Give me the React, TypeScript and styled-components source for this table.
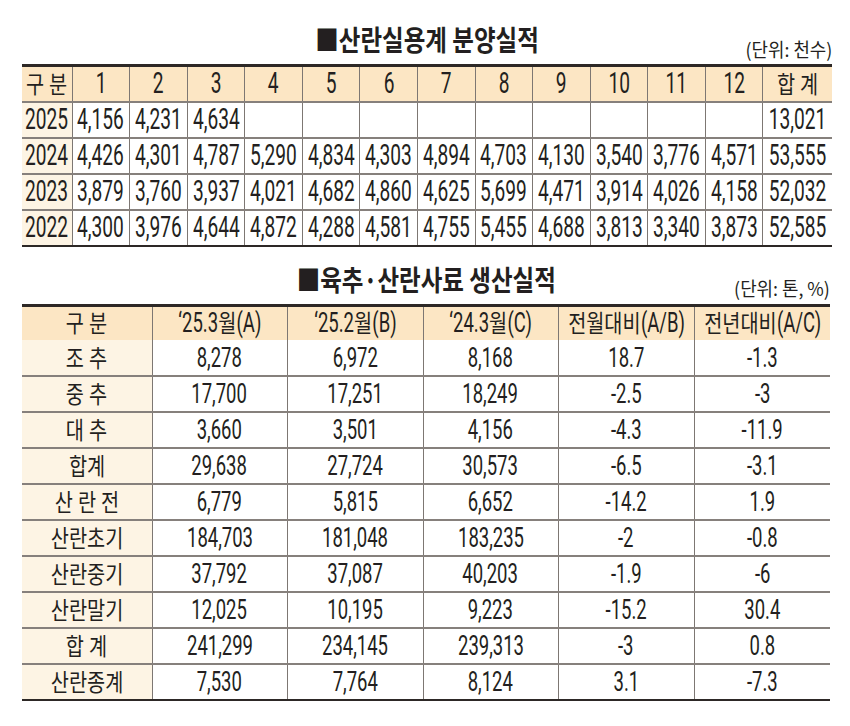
import React from 'react';
import styled, { createGlobalStyle } from 'styled-components';

const GlobalStyle = createGlobalStyle`
  html, body { margin: 0; padding: 0; background: #ffffff; }
  body { font-family: "Noto Sans CJK KR", sans-serif; color: #231f20; }
`;

const Page = styled.div`
  width: 850px;
  height: 726px;
  box-sizing: border-box;
  padding: 0 18px 0 22px;
  display: flex;
  flex-direction: column;
`;

const Head = styled.div<{ $h: number; $w: number }>`
  height: ${p => p.$h}px;
  width: ${p => p.$w}px;
  display: grid;
  grid-template-columns: 1fr auto 1fr;
  align-items: end;
`;

const Title = styled.h2<{ $pb: number }>`
  grid-column: 2;
  margin: 0;
  padding-bottom: ${p => p.$pb}px;
  font-family: "Noto Sans CJK KR", sans-serif;
  font-size: 28px;
  font-weight: 700;
  line-height: 1;
  white-space: nowrap;
  color: #231f20;
  transform: scaleX(0.84);
`;

const Unit = styled.div<{ $pb: number }>`
  grid-column: 3;
  justify-self: end;
  padding-bottom: ${p => p.$pb}px;
  font-family: "Noto Sans CJK KR", sans-serif;
  font-size: 19px;
  line-height: 1;
  white-space: nowrap;
  transform: scaleX(0.94);
  transform-origin: right bottom;
`;

const Table = styled.table<{ $w: number }>`
  width: ${p => p.$w}px;
  border-collapse: collapse;
  table-layout: fixed;
  border-top: 3px solid #2d2826;
  border-bottom: 2px solid #2d2826;
`;

const Row = styled.tr<{ $h: number }>`
  height: ${p => p.$h}px;
  & + & > td {
    border-top: 2px solid #86807c;
  }
`;

const Cell = styled.td<{ $kind: 'head' | 'side' | 'data' }>`
  padding: 0;
  vertical-align: middle;
  background: ${p => (p.$kind === 'head' ? '#fce6c4' : p.$kind === 'side' ? '#fdf4e4' : '#ffffff')};
  border-left: 1px solid #7d7773;
  &:first-child {
    border-left: none;
  }
`;

const Center = styled.div`
  display: flex;
  justify-content: center;
  align-items: center;
  white-space: nowrap;
`;

const Squeeze = styled.span<{ $fs: number; $s: number }>`
  display: inline-block;
  flex: none;
  font-family: Roboto, "Noto Sans CJK KR", sans-serif;
  font-size: ${p => p.$fs}px;
  line-height: 1;
  color: #231f20;
  white-space: pre;
  transform: scaleX(${p => p.$s});
`;

const Hangul = styled.span<{ $fs: number; $k: number; $n: number }>`
  display: inline-block;
  font-family: "Noto Sans CJK KR", sans-serif;
  font-size: ${p => p.$fs}px;
  line-height: 1;
  transform: scaleX(${p => p.$k});
  margin: 0 ${p => ((p.$n * (p.$k - 1)) / 2).toFixed(3)}em;
`;

const DIGIT_SCALE = 0.66;
const HANGUL_SCALE = 0.82;

function Txt({ text, fs, hfs }: { text: string; fs: number; hfs: number }) {
  const parts = text.split(/([\uAC00-\uD7A3]+)/).filter(s => s.length > 0);
  const k = HANGUL_SCALE / DIGIT_SCALE;
  return (
    <Center>
      <Squeeze $fs={fs} $s={DIGIT_SCALE}>
        {parts.map((p, i) =>
          /[\uAC00-\uD7A3]/.test(p) ? (
            <Hangul key={i} $fs={hfs} $k={k} $n={p.length}>
              {p}
            </Hangul>
          ) : (
            <React.Fragment key={i}>{p}</React.Fragment>
          )
        )}
      </Squeeze>
    </Center>
  );
}

const t1Head = ['구 분', '1', '2', '3', '4', '5', '6', '7', '8', '9', '10', '11', '12', '합 계'];
const t1Rows: string[][] = [
  ['2025', '4,156', '4,231', '4,634', '', '', '', '', '', '', '', '', '', '13,021'],
  ['2024', '4,426', '4,301', '4,787', '5,290', '4,834', '4,303', '4,894', '4,703', '4,130', '3,540', '3,776', '4,571', '53,555'],
  ['2023', '3,879', '3,760', '3,937', '4,021', '4,682', '4,860', '4,625', '5,699', '4,471', '3,914', '4,026', '4,158', '52,032'],
  ['2022', '4,300', '3,976', '4,644', '4,872', '4,288', '4,581', '4,755', '5,455', '4,688', '3,813', '3,340', '3,873', '52,585'],
];
const t1Cols = [50, ...Array(12).fill(57.58), 69];

const t2Head = ['구 분', '‘25.3월(A)', '‘25.2월(B)', '‘24.3월(C)', '전월대비(A/B)', '전년대비(A/C)'];
const t2Rows: string[][] = [
  ['조 추', '8,278', '6,972', '8,168', '18.7', '-1.3'],
  ['중 추', '17,700', '17,251', '18,249', '-2.5', '-3'],
  ['대 추', '3,660', '3,501', '4,156', '-4.3', '-11.9'],
  ['합계', '29,638', '27,724', '30,573', '-6.5', '-3.1'],
  ['산 란 전', '6,779', '5,815', '6,652', '-14.2', '1.9'],
  ['산란초기', '184,703', '181,048', '183,235', '-2', '-0.8'],
  ['산란중기', '37,792', '37,087', '40,203', '-1.9', '-6'],
  ['산란말기', '12,025', '10,195', '9,223', '-15.2', '30.4'],
  ['합 계', '241,299', '234,145', '239,313', '-3', '0.8'],
  ['산란종계', '7,530', '7,764', '8,124', '3.1', '-7.3'],
];
const t2Cols = [130, 135, 136, 135, 136, 136];

function DataTable({
  cols,
  head,
  rows,
  headH,
  rowH,
  fs,
  hfs,
}: {
  cols: number[];
  head: string[];
  rows: string[][];
  headH: number;
  rowH: number;
  fs: number;
  hfs: number;
}) {
  const w = cols.reduce((a, b) => a + b, 0);
  return (
    <Table $w={w}>
      <colgroup>
        {cols.map((c, i) => (
          <col key={i} style={{ width: c }} />
        ))}
      </colgroup>
      <tbody>
        <Row $h={headH}>
          {head.map((h, i) => (
            <Cell key={i} $kind="head">
              <Txt text={h} fs={fs} hfs={hfs} />
            </Cell>
          ))}
        </Row>
        {rows.map((r, ri) => (
          <Row key={ri} $h={rowH}>
            {r.map((v, i) => (
              <Cell key={i} $kind={i === 0 ? 'side' : 'data'}>
                {v ? <Txt text={v} fs={fs} hfs={hfs} /> : null}
              </Cell>
            ))}
          </Row>
        ))}
      </tbody>
    </Table>
  );
}

export default function App() {
  return (
    <>
      <GlobalStyle />
      <Page>
        <Head $h={64} $w={810}>
          <Title $pb={11}>■산란실용계 분양실적</Title>
          <Unit $pb={6}>(단위: 천수)</Unit>
        </Head>
        <DataTable cols={t1Cols} head={t1Head} rows={t1Rows} headH={36} rowH={36} fs={29} hfs={24} />
        <Head $h={57} $w={808}>
          <Title $pb={11}>■육추·산란사료 생산실적</Title>
          <Unit $pb={7}>(단위: 톤, %)</Unit>
        </Head>
        <DataTable cols={t2Cols} head={t2Head} rows={t2Rows} headH={35} rowH={36} fs={28} hfs={24} />
      </Page>
    </>
  );
}
